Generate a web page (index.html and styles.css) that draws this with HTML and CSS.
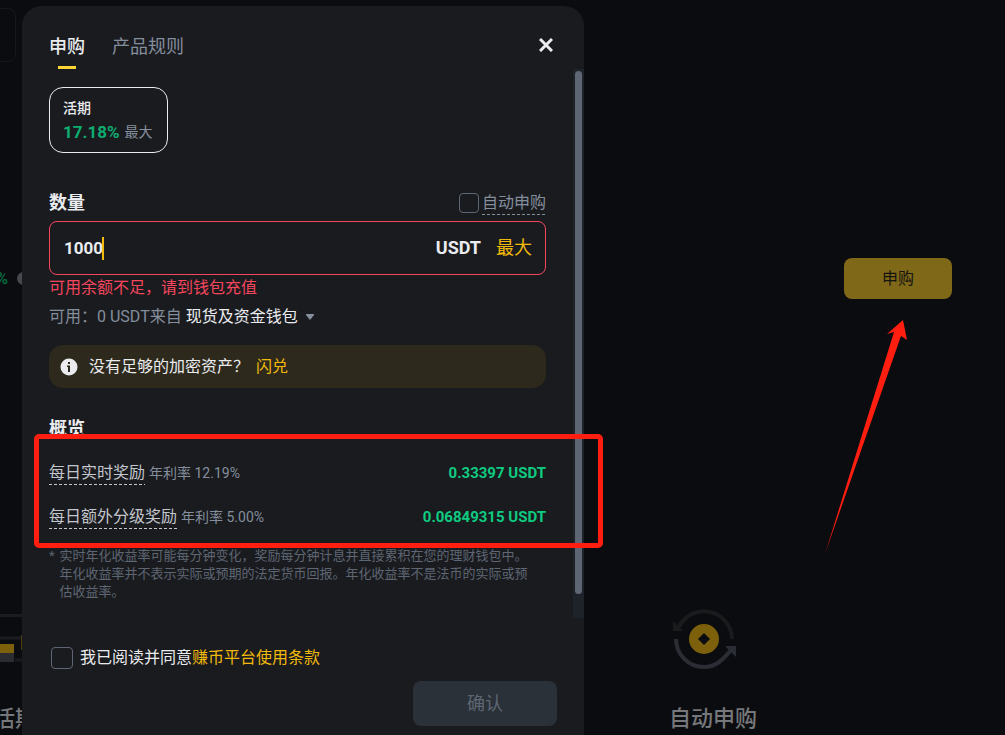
FILE: index.html
```html
<!DOCTYPE html>
<html lang="zh-CN">
<head>
    <meta charset="UTF-8">
    <meta name="viewport" content="width=device-width, initial-scale=1.0">
    <title>申购</title>
    <link rel="stylesheet" href="styles.css">
</head>
<body>
    <main class="page">
        <div class="search-box"></div>
        <div class="product-row">
            <div class="product-rate"><span>%</span><i class="rate-dot"></i></div>
            <button class="subscribe-btn" type="button">申购</button>
        </div>
        <div class="features">
            <section class="feature feature-left">
                <svg class="feature-art" width="37" height="62" viewBox="0 0 37 62">
                    <path d="M0 6.500H37M0 29H37M15 51H37" stroke="#1b1c1f" stroke-width="3"/>
                    <rect x="0" y="35" width="14" height="9" fill="#7c600b"/>
                    <rect x="0" y="44" width="14" height="9" fill="#2a2c31"/>
                    <rect x="21" y="26" width="12" height="15" fill="#4b3d0c"/>
                </svg>
                <h2>活期</h2>
            </section>
            <section class="feature">
                <svg class="feature-art" width="70" height="62" viewBox="0 0 70 62">
                    <path d="M63 30A28 28 0 0 0 9 20" fill="none" stroke="#1a1b1d" stroke-width="4"/>
                    <path d="M4 12v10h10z" fill="#1a1b1d"/>
                    <path d="M7 30c0 15 12 28 28 28c13 0 19-8 28-18" fill="none" stroke="#2a2d33" stroke-width="4"/>
                    <path d="M56 37h11v11z" fill="#2a2d33"/>
                    <circle cx="35" cy="30" r="15" fill="#7c600b"/>
                    <path d="M35 24l6 6l-6 6l-6-6z" fill="#0b0c0f"/>
                </svg>
                <h2>自动申购</h2>
            </section>
        </div>
    </main>

    <div class="modal" role="dialog" aria-label="申购">
        <header class="modal-header">
            <nav class="tabs">
                <button class="tab active" type="button">申购</button>
                <button class="tab" type="button">产品规则</button>
            </nav>
            <button class="close-btn" type="button" aria-label="关闭">
                <svg width="14" height="14" viewBox="0 0 14 14"><path d="M1 1l12 12M13 1L1 13" stroke="#eaecef" stroke-width="3"/></svg>
            </button>
        </header>

        <div class="modal-body">
            <div class="modal-content">
                <button class="term-card" type="button">
                    <span class="term-name">活期</span>
                    <span class="term-rate"><b>17.18%</b><span>最大</span></span>
                </button>

                <div class="amount-head">
                    <label class="section-title" for="amount">数量</label>
                    <div class="auto">
                        <input class="check check-small" type="checkbox" id="auto">
                        <label for="auto">自动申购</label>
                    </div>
                </div>
                <div class="amount-box">
                    <input class="amount-input" type="text" id="amount" value="1000">
                    <span class="caret"></span>
                    <span class="unit">USDT</span>
                    <button class="max-btn" type="button">最大</button>
                </div>
                <p class="error">可用余额不足，请到钱包充值</p>
                <div class="available">
                    <span>可用：0 USDT来自</span>
                    <button class="wallet-btn" type="button">现货及资金钱包
                        <svg width="8" height="6" viewBox="0 0 8 6"><path d="M0 0h8v1L4 6L0 1z" fill="#848e9c"/></svg>
                    </button>
                </div>

                <div class="notice">
                    <svg width="18" height="18" viewBox="0 0 18 18">
                        <circle cx="9" cy="9" r="8.500" fill="#eaecef"/>
                        <path d="M8 4h2v2H8zM7 7.500h3V14H8V9H7z" fill="#2e291d"/>
                    </svg>
                    <span>没有足够的加密资产？</span>
                    <a href="#">闪兑</a>
                </div>

                <h2 class="section-title overview-title">概览</h2>
                <div class="reward">
                    <span class="reward-name">每日实时奖励</span>
                    <span class="reward-apr">年利率 12.19%</span>
                    <span class="reward-value">0.33397 USDT</span>
                </div>
                <div class="reward">
                    <span class="reward-name">每日额外分级奖励</span>
                    <span class="reward-apr">年利率 5.00%</span>
                    <span class="reward-value">0.06849315 USDT</span>
                </div>
                <div class="remark">
                    <span>*</span>
                    <p>实时年化收益率可能每分钟变化，奖励每分钟计息并直接累积在您的理财钱包中。<br>年化收益率并不表示实际或预期的法定货币回报。年化收益率不是法币的实际或预<br>估收益率。</p>
                </div>
            </div>
            <div class="scrollbar"><div class="thumb"></div></div>
        </div>

        <footer class="modal-footer">
            <div class="agree">
                <input class="check" type="checkbox" id="agree">
                <label for="agree">我已阅读并同意<a href="#">赚币平台使用条款</a></label>
            </div>
            <button class="confirm-btn" type="button" disabled>确认</button>
        </footer>
    </div>

    <!-- callouts -->
    <div class="mark-box"></div>
    <svg class="mark-arrow" width="84" height="236" viewBox="0 0 84 236">
        <path d="M79 0L63 14L70 12L1 234L77 16L83 20z" fill="#ff1e10"/>
    </svg>
</body>
</html>
```

FILE: styles.css
```css
* {
    box-sizing: border-box;
}
body {
    margin: 0;
    min-height: 100vh;
    overflow: hidden;
    background-color: #0b0c0f;
    color: #eaecef;
    font-family: Roboto, "Noto Sans CJK SC", sans-serif;
    font-size: 16px;
    line-height: 24px;
}
h2, p {
    margin: 0;
}
button {
    padding: 0;
    border: none;
    background: none;
    color: inherit;
    font: inherit;
    cursor: pointer;
}
a {
    color: #f0b90b;
    text-decoration: none;
}

/* page behind the dialog */
.page {
    padding-top: 8px;
}
.search-box {
    width: 16px;
    height: 54px;
    border: 1px solid #16181b;
    border-left: none;
    border-radius: 0 8px 8px 0;
}
.product-row {
    display: flex;
    align-items: center;
    justify-content: space-between;
    margin-top: 196px;
    padding-right: 53px;
}
.product-rate {
    display: flex;
    align-items: center;
    justify-content: flex-end;
    gap: 9px;
    width: 30px;
    color: #07653f;
    font-weight: bold;
}
.rate-dot {
    flex: none;
    width: 13px;
    height: 13px;
    border-radius: 50%;
    background-color: #45494f;
}
.subscribe-btn {
    width: 108px;
    height: 41px;
    border-radius: 8px;
    background-color: #806819;
    color: #15150f;
}
.features {
    display: flex;
    justify-content: space-between;
    margin-top: 310px;
    padding-right: 248px;
}
.feature h2 {
    display: flex;
    margin-top: 32px;
    color: #75777a;
    font-size: 22px;
    font-weight: 500;
    line-height: 32px;
}
.feature-left {
    width: 37px;
}
.feature-left h2 {
    justify-content: flex-end;
    white-space: nowrap;
}
.feature-art {
    display: block;
}

/* dialog */
.modal {
    position: absolute;
    top: 6px;
    bottom: 0;
    left: 22px;
    width: 562px;
    border-radius: 20px 20px 0 0;
    background-color: #1a1b1f;
}
.modal-header {
    display: flex;
    align-items: flex-start;
    justify-content: space-between;
    height: 63px;
    padding: 29px 27px 0 27px;
}
.tabs {
    display: flex;
    gap: 27px;
}
.tab {
    display: flex;
    flex-direction: column;
    align-items: center;
    color: #848e9c;
    font-size: 18px;
}
.tab.active {
    color: #eaecef;
    font-weight: 500;
}
.tab.active::after {
    content: "";
    width: 18px;
    height: 3px;
    margin-top: 7px;
    background-color: #fcd535;
}
.close-btn {
    display: flex;
    padding: 3px 4px;
}
.modal-body {
    display: flex;
}
.modal-content {
    flex: 1;
    min-width: 0;
    padding: 18px 27px 17px;
}
.scrollbar {
    width: 11px;
    padding: 2px;
    background-color: #1e2329;
}
.thumb {
    height: 96%;
    border-radius: 4px;
    background-color: #5e6673;
}
.term-card {
    display: flex;
    flex-direction: column;
    justify-content: center;
    width: 119px;
    height: 66px;
    padding: 0 13px;
    border: 1px solid #eaecef;
    border-radius: 14px;
    text-align: left;
}
.term-name {
    font-size: 14px;
    font-weight: 500;
}
.term-rate {
    display: flex;
    gap: 5px;
    color: #848e9c;
    font-size: 14px;
    white-space: nowrap;
}
.term-rate b {
    color: #0ead70;
    font-size: 17px;
}
.amount-head {
    display: flex;
    align-items: center;
    justify-content: space-between;
    margin-top: 38px;
}
.section-title {
    font-size: 18px;
    font-weight: bold;
    line-height: 24px;
}
.check {
    appearance: none;
    width: 22px;
    height: 22px;
    margin: 0;
    border: 1px solid #5e6673;
    border-radius: 4px;
}
.check-small {
    width: 20px;
    height: 20px;
}
.auto {
    display: flex;
    align-items: center;
    gap: 3px;
    height: 24px;
    color: #848e9c;
}
.auto label, .reward-name {
    background: repeating-linear-gradient(90deg, currentColor 0 3px, transparent 3px 5px) left bottom / 100% 1px no-repeat;
}
.amount-box {
    display: flex;
    align-items: center;
    height: 54px;
    margin-top: 6px;
    padding: 0 13px 0 14px;
    border: 1px solid #f6465d;
    border-radius: 8px;
    font-size: 18px;
}
.amount-input {
    width: 38px;
    padding: 0;
    border: none;
    outline: none;
    background: none;
    color: #eaecef;
    font: bold 17px Roboto, sans-serif;
}
.caret {
    width: 2px;
    height: 23px;
    background-color: #f0b90b;
}
.unit {
    margin-left: auto;
    font-weight: bold;
}
.max-btn {
    margin-left: 15px;
    color: #f0b90b;
}
.error {
    margin-top: 1px;
    color: #f6465d;
}
.available {
    display: flex;
    gap: 4px;
    margin-top: 5px;
    color: #848e9c;
}
.wallet-btn {
    display: flex;
    align-items: center;
    gap: 8px;
    color: #eaecef;
}
.notice {
    display: flex;
    align-items: center;
    height: 43px;
    margin-top: 16px;
    padding: 0 11px;
    border-radius: 14px;
    background-color: #2e291d;
}
.notice span {
    margin: 0 7px 0 11px;
}
.overview-title {
    margin-top: 29px;
}
.reward {
    display: flex;
    align-items: center;
    gap: 4px;
    margin-top: 20px;
}
.reward-name {
    color: #c3c6cc;
}
.reward-apr {
    color: #848e9c;
    font-size: 14px;
}
.reward-value {
    margin-left: auto;
    color: #0ecb81;
    font-size: 15px;
    font-weight: bold;
}
.remark {
    display: flex;
    gap: 5px;
    margin-top: 18px;
    color: #5e6673;
    font-size: 13px;
    line-height: 18px;
    white-space: nowrap;
}
.modal-footer {
    display: flex;
    flex-direction: column;
    padding: 29px 27px 0 29px;
}
.agree {
    display: flex;
    align-items: center;
    gap: 7px;
    height: 22px;
}
.confirm-btn {
    align-self: flex-end;
    width: 144px;
    height: 45px;
    margin-top: 12px;
    border-radius: 8px;
    background-color: #2b3139;
    color: #5e6673;
    font-size: 18px;
    cursor: default;
}

/* callouts */
.mark-box {
    position: absolute;
    top: 434px;
    left: 34px;
    width: 569px;
    height: 114px;
    border: 5px solid #ff1e10;
    border-radius: 5px;
}
.mark-arrow {
    position: absolute;
    top: 320px;
    left: 824px;
}
```
